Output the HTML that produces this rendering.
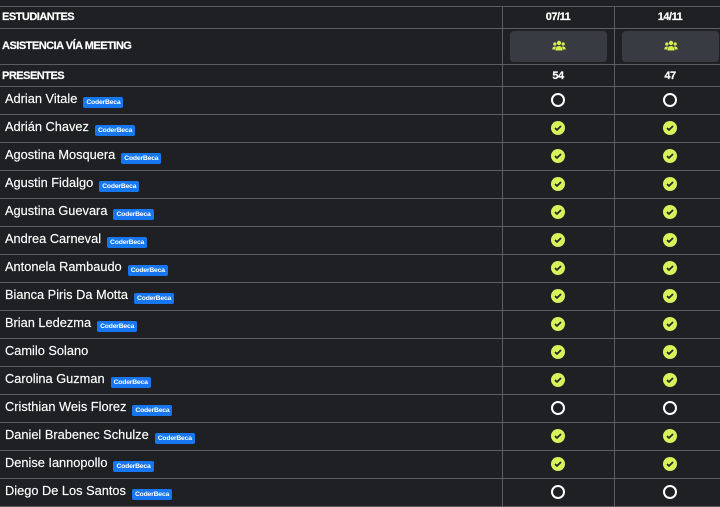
<!DOCTYPE html>
<html><head><meta charset="utf-8"><style>
*{margin:0;padding:0;box-sizing:border-box}
body{width:720px;height:506px;background:#1f2023;overflow:hidden;font-family:"Liberation Sans",Arial,sans-serif;color:#fff;position:relative}
.r{position:absolute;left:0;width:720px;border-top:1.5px solid #5c5c5e}
.vl{position:absolute;top:6px;height:500px;border-left:1px solid #5c5c5e}
.h{position:absolute;left:2px;font-size:11px;font-weight:bold;letter-spacing:-0.5px;-webkit-text-stroke:0.2px #fff}
.c{position:absolute;font-size:11px;font-weight:bold;letter-spacing:-0.5px;text-align:center;width:112px;-webkit-text-stroke:0.2px #fff}
.n{position:absolute;left:5px;font-size:12.8px;white-space:nowrap;-webkit-text-stroke:0.15px #fff}
.b{display:inline-block;background:#1677f0;color:#fff;font-size:6.8px;font-weight:bold;padding:1px 3px;border-radius:2px;vertical-align:-1px;margin-left:6px;line-height:9px;letter-spacing:-0.2px;-webkit-text-stroke:0}
.btn{position:absolute;top:31px;width:97px;height:31px;background:#393b42;border-radius:4px}
.o{position:absolute;width:14px;height:14px;border:2px solid #fff;border-radius:50%}
.k{position:absolute;width:14px;height:14px;background:#d8f25a;border-radius:50%}
.k svg{position:absolute;left:3px;top:4px}
</style></head><body>
<div class="r" style="top:6px"></div>
<div class="r" style="top:28px"></div>
<div class="r" style="top:64px"></div>
<div class="r" style="top:86px"></div>
<div class="vl" style="left:502px"></div>
<div class="vl" style="left:614px"></div>
<div class="h" style="top:11px">ESTUDIANTES</div>
<div class="h" style="top:40px">ASISTENCIA VÍA MEETING</div>
<div class="h" style="top:70px">PRESENTES</div>
<div class="c" style="left:502px;top:11px">07/11</div>
<div class="c" style="left:614px;top:11px">14/11</div>
<div class="c" style="left:502px;top:70px">54</div>
<div class="c" style="left:614px;top:70px">47</div>
<div class="btn" style="left:510px"><svg style="position:absolute;left:42px;top:9px" width="14" height="12" viewBox="0 0 14 12"><g fill="#d4ec50"><circle cx="7" cy="3" r="2.2"/><circle cx="2.8" cy="4" r="1.6"/><circle cx="11.2" cy="4" r="1.6"/><path d="M3.5 10.5c0-3 1.5-4.5 3.5-4.5s3.5 1.5 3.5 4.5z"/><path d="M0.3 9.5c0-2 1-3 2.5-3 .8 0 1.2.2 1.4.5-.6.7-.9 1.5-1 2.5z"/><path d="M13.7 9.5c0-2-1-3-2.5-3-.8 0-1.2.2-1.4.5.6.7.9 1.5 1 2.5z"/></g></svg></div>
<div class="btn" style="left:622px"><svg style="position:absolute;left:42px;top:9px" width="14" height="12" viewBox="0 0 14 12"><g fill="#d4ec50"><circle cx="7" cy="3" r="2.2"/><circle cx="2.8" cy="4" r="1.6"/><circle cx="11.2" cy="4" r="1.6"/><path d="M3.5 10.5c0-3 1.5-4.5 3.5-4.5s3.5 1.5 3.5 4.5z"/><path d="M0.3 9.5c0-2 1-3 2.5-3 .8 0 1.2.2 1.4.5-.6.7-.9 1.5-1 2.5z"/><path d="M13.7 9.5c0-2-1-3-2.5-3-.8 0-1.2.2-1.4.5.6.7.9 1.5 1 2.5z"/></g></svg></div>
<div id="rows"></div>
<script>
var d=[["Adrian Vitale",1,0,0],["Adrián Chavez",1,1,1],["Agostina Mosquera",1,1,1],["Agustin Fidalgo",1,1,1],["Agustina Guevara",1,1,1],["Andrea Carneval",1,1,1],["Antonela Rambaudo",1,1,1],["Bianca Piris Da Motta",1,1,1],["Brian Ledezma",1,1,1],["Camilo Solano",0,1,1],["Carolina Guzman",1,1,1],["Cristhian Weis Florez",1,0,0],["Daniel Brabenec Schulze",1,1,1],["Denise Iannopollo",1,1,1],["Diego De Los Santos",1,0,0]];
var h="",chk='<svg width="8" height="6" viewBox="0 0 8 6"><path d="M1 3l2 2 4-4" stroke="#1f2023" stroke-width="1.6" fill="none"/></svg>';
d.forEach(function(r,i){var t=86+i*28;
h+='<div class="r" style="top:'+(t+28)+'px"></div>';
h+='<div class="n" style="top:'+(t+5)+'px">'+r[0]+(r[1]?'<span class="b">CoderBeca</span>':'')+'</div>';
[551,663].forEach(function(x,j){h+=r[2+j]?'<div class="k" style="left:'+x+'px;top:'+(t+7)+'px">'+chk+'</div>':'<div class="o" style="left:'+x+'px;top:'+(t+7)+'px"></div>';});});
document.getElementById("rows").innerHTML=h;
</script>
</body></html>
